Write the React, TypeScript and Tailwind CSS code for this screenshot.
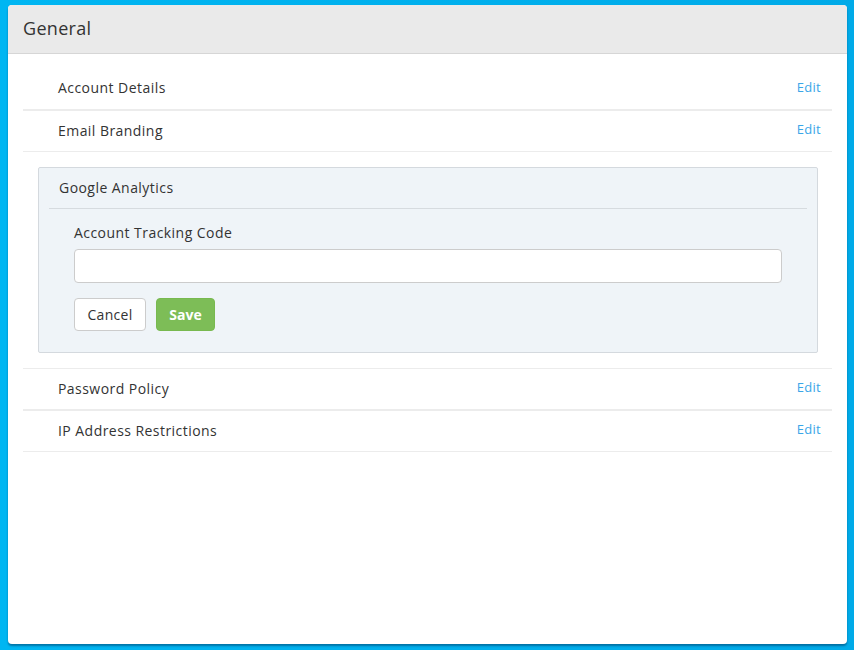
import React from "react";

function Row({ label, top }: { label: string; top?: boolean }) {
  return (
    <div
      className={`flex h-[42px] items-center justify-between border-b border-[#ececec] pb-[2px] pl-[35px] pr-[11px] ${
        top ? "border-t" : ""
      }`}
    >
      <span className="text-[14px] tracking-[0.45px] text-[#333]">{label}</span>
      <a className="cursor-pointer text-[13px] tracking-[0.3px] text-[#3aa6e8]">Edit</a>
    </div>
  );
}

export default function App() {
  return (
    <div
      className="flex h-[650px] w-full bg-[linear-gradient(90deg,#00b6f2,#00aae8)] pb-[6px] pl-[8px] pr-[7px] pt-[5px]"
      style={{ fontFamily: '"Open Sans", "Liberation Sans", sans-serif' }}
    >
      <div className="flex h-full w-full flex-col overflow-hidden rounded-[4px] bg-white shadow-[0_2px_2px_rgba(0,40,80,0.45)]">
        <div className="flex h-[49px] shrink-0 items-center border-b border-[#d6d6d6] bg-[#eaeaea] pb-[2px] pl-[15px]">
          <h1 className="text-[18px] tracking-[0.3px] text-[#333]">General</h1>
        </div>
        <div className="px-[15px] pt-[14px]">
          <Row label="Account Details" />
          <Row label="Email Branding" top />
          <div className="my-[15px] ml-[15px] mr-[14px] rounded-[2px] border border-[#d4d9de] bg-[#eff4f8]">
            <div className="flex h-[40px] items-center pb-[2px] pl-[20px] text-[14px] tracking-[0.45px] text-[#333]">
              Google Analytics
            </div>
            <div className="mx-[10px] border-t border-[#d6dbdf]" />
            <div className="px-[35px] pb-[21px] pt-[16px]">
              <label className="block text-[14px] leading-[16px] tracking-[0.45px] text-[#333]">
                Account Tracking Code
              </label>
              <input
                type="text"
                className="mt-[8px] block h-[34px] w-full rounded-[4px] border border-[#cccccc] bg-white px-3 text-[14px] outline-none"
              />
              <div className="mt-[15px] flex gap-[10px]">
                <button className="h-[33px] w-[72px] rounded-[4px] border border-[#cccccc] bg-white pb-[1px] text-[14px] tracking-[0.3px] text-[#333]">
                  Cancel
                </button>
                <button className="h-[33px] w-[59px] rounded-[4px] border border-[#78b94f] bg-[#7dbd57] pb-[1px] text-[14px] font-bold text-white">
                  Save
                </button>
              </div>
            </div>
          </div>
          <Row label="Password Policy" top />
          <Row label="IP Address Restrictions" top />
        </div>
      </div>
    </div>
  );
}
